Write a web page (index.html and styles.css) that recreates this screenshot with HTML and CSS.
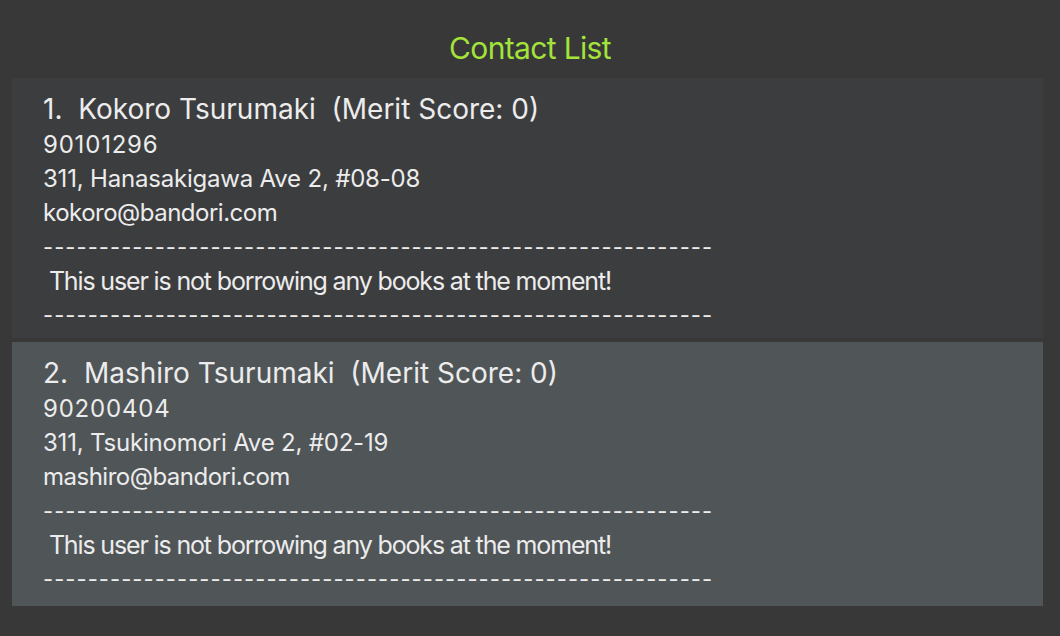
FILE: index.html
```html
<!DOCTYPE html>
<html lang="en">
<head>
<meta charset="utf-8">
<title>Contact List</title>
<link rel="stylesheet" href="styles.css">
</head>
<body>
<header class="header">
  <h1 class="title">Contact List</h1>
</header>
<main class="list">
  <section class="card">
    <div class="name">1.&nbsp; Kokoro Tsurumaki&nbsp; (Merit Score: 0)</div>
    <div class="line phone">90101296</div>
    <div class="line">311, Hanasakigawa Ave 2, #08-08</div>
    <div class="line email">kokoro@bandori.com</div>
    <div class="line dashes">------------------------------------------------------------</div>
    <div class="line note">&nbsp;This user is not borrowing any books at the moment!</div>
    <div class="line dashes">------------------------------------------------------------</div>
  </section>
  <section class="card card-alt">
    <div class="name">2.&nbsp; Mashiro Tsurumaki&nbsp; (Merit Score: 0)</div>
    <div class="line phone">90200404</div>
    <div class="line">311, Tsukinomori Ave 2, #02-19</div>
    <div class="line email">mashiro@bandori.com</div>
    <div class="line dashes">------------------------------------------------------------</div>
    <div class="line note">&nbsp;This user is not borrowing any books at the moment!</div>
    <div class="line dashes">------------------------------------------------------------</div>
  </section>
</main>
</body>
</html>
```

FILE: styles.css
```css
html, body {
  margin: 0;
  padding: 0;
  background: #383838;
  height: 100%;
}

body {
  font-family: Inter, "Noto Sans", "Liberation Sans", sans-serif;
  color: #ececec;
}

.header {
  padding: 30px 0 12px;
  display: flex;
  justify-content: center;
}

.title {
  margin: 0;
  font-size: 30px;
  line-height: 36px;
  font-weight: 400;
  letter-spacing: -0.65px;
  color: #a3e33a;
}

.list {
  display: flex;
  flex-direction: column;
  gap: 4px;
  padding: 0 17px 0 12px;
}

.card {
  background: #3c3d3f;
  padding: 13px 20px 6px 31px;
  display: flex;
  flex-direction: column;
}

.card-alt {
  background: #505558;
  padding-bottom: 10px;
}

.name {
  font-size: 28px;
  line-height: 36px;
  margin-bottom: 1px;
  white-space: nowrap;
}

.line {
  font-size: 24px;
  line-height: 34px;
  white-space: nowrap;
  letter-spacing: -0.2px;
}

.phone {
  letter-spacing: 0.8px;
}

.email {
  letter-spacing: -0.5px;
}

.note {
  font-size: 25px;
  letter-spacing: -1.15px;
}

.dashes {
  font-size: 22px;
  letter-spacing: 1.05px;
}
```
